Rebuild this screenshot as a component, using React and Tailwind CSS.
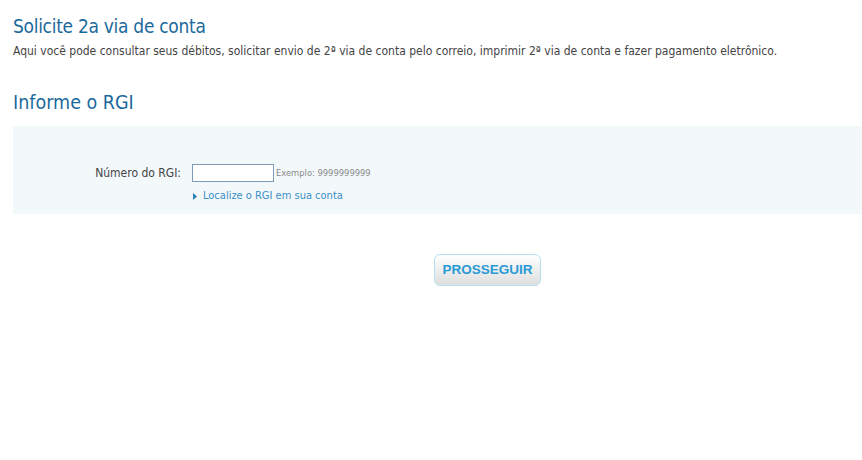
import React from "react";

export default function App() {
  return (
    <div className="w-[862px] h-[460px] bg-white font-['DejaVu_Sans_Condensed','DejaVu_Sans',sans-serif]">
      <div className="pl-[13px] pt-[14px]">
        <h1 className="text-[19px] leading-[24px] tracking-[-0.3px] text-[#1c6a9c]">Solicite 2a via de conta</h1>
        <p className="mt-[6px] text-[12px] leading-[15px] text-[#444] whitespace-nowrap">
          Aqui você pode consultar seus débitos, solicitar envio de 2ª via de conta pelo correio, imprimir 2ª via de conta e fazer pagamento eletrônico.
        </p>
        <h2 className="mt-[32px] text-[19.5px] leading-[24px] text-[#1c6a9c]">Informe o RGI</h2>
      </div>

      <div className="ml-[13px] mt-[11px] h-[88px] bg-[#f3f8fb] pt-[38px]">
        <div className="flex items-start">
          <label className="w-[179px] pr-[11px] text-right text-[12px] leading-[18px] text-[#444]">Número do RGI:</label>
          <div>
            <div className="flex items-center">
              <input type="text" className="w-[82px] h-[18px] border border-[#7f9db9] bg-white outline-none" />
              <span className="ml-[2px] text-[9.3px] text-[#888]">Exemplo: 9999999999</span>
            </div>
            <a href="#" className="mt-[7px] flex items-center text-[11px] leading-[14px] text-[#3a8fc7]">
              <svg width="4" height="7" viewBox="0 0 4 7" className="ml-[1px] mr-[6px]">
                <path d="M0 0 L4 3.5 L0 7 Z" fill="#2a7fb8" />
              </svg>
              Localize o RGI em sua conta
            </a>
          </div>
        </div>
      </div>

      <div className="mt-[40px] pl-[434px]">
        <button className="w-[107px] h-[32px] rounded-[6px] border border-[#b9e0f2] bg-gradient-to-b from-white to-[#dedede] font-['Liberation_Sans',sans-serif] text-[13.5px] font-bold text-[#2a9ad6]">
          PROSSEGUIR
        </button>
      </div>
    </div>
  );
}
